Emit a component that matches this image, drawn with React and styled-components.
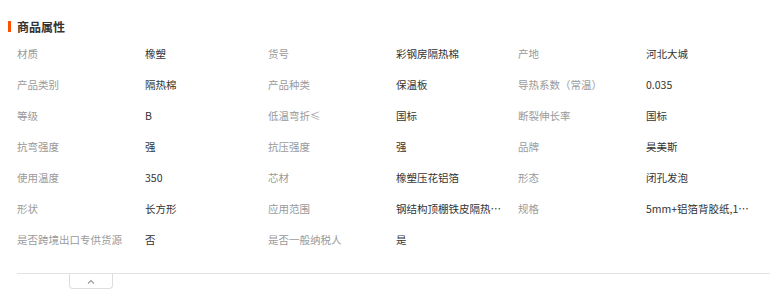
import React from "react";
import styled, { createGlobalStyle } from "styled-components";

const rows = [
  ["材质", "橡塑", "货号", "彩钢房隔热棉", "产地", "河北大城"],
  ["产品类别", "隔热棉", "产品种类", "保温板", "导热系数（常温）", "0.035"],
  ["等级", "B", "低温弯折≤", "国标", "断裂伸长率", "国标"],
  ["抗弯强度", "强", "抗压强度", "强", "品牌", "昊美斯"],
  ["使用温度", "350", "芯材", "橡塑压花铝箔", "形态", "闭孔发泡"],
  ["形状", "长方形", "应用范围", "钢结构顶棚铁皮隔热保温", "规格", "5mm+铝箔背胶纸,10mm"],
  ["是否跨境出口专供货源", "否", "是否一般纳税人", "是"],
];

const Global = createGlobalStyle`
  body {
    margin: 0;
    background: #fff;
    font-family: "Noto Sans CJK SC", "Noto Sans", sans-serif;
  }
`;

const Section = styled.div`
  padding: 16px 6px 0 8px;
`;

const Title = styled.h3`
  margin: 0;
  display: flex;
  align-items: center;
  height: 20px;
  font-size: 12px;
  font-weight: 700;
  color: #333;
  &::before {
    content: "";
    width: 3px;
    height: 11px;
    background: #ff5000;
    margin-right: 6px;
  }
`;

const Grid = styled.div`
  display: grid;
  grid-template-columns: 251px 250px 251px;
  padding: 2px 0 18px 9px;
`;

const Cell = styled.div`
  display: flex;
  align-items: center;
  height: 31px;
  font-size: 10.5px;
`;

const Label = styled.span`
  width: 128px;
  flex-shrink: 0;
  color: #9a9a9a;
`;

const Value = styled.span`
  width: 106px;
  color: #333;
  white-space: nowrap;
  overflow: hidden;
  text-overflow: ellipsis;
`;

const Footer = styled.div`
  margin-left: 9px;
  border-top: 1px solid #e3e3e3;
  padding-left: 52px;
`;

const Toggle = styled.button`
  display: flex;
  align-items: center;
  justify-content: center;
  width: 44px;
  height: 15px;
  padding: 0;
  background: #fff;
  border: 1px solid #ddd;
  border-top: none;
  border-radius: 0 0 4px 4px;
  cursor: pointer;
`;

export default function App() {
  return (
    <Section>
      <Global />
      <Title>商品属性</Title>
      <Grid>
        {rows.map((r, i) =>
          [0, 2, 4].map(j =>
            r[j] ? (
              <Cell key={i + "-" + j}>
                <Label>{r[j]}</Label>
                <Value>{r[j + 1]}</Value>
              </Cell>
            ) : (
              <Cell key={i + "-" + j} />
            )
          )
        )}
      </Grid>
      <Footer>
        <Toggle>
          <svg width="8" height="5" viewBox="0 0 8 5">
            <path d="M1 4.5 L4 1.5 L7 4.5" fill="none" stroke="#999" strokeWidth="1.1" />
          </svg>
        </Toggle>
      </Footer>
    </Section>
  );
}
